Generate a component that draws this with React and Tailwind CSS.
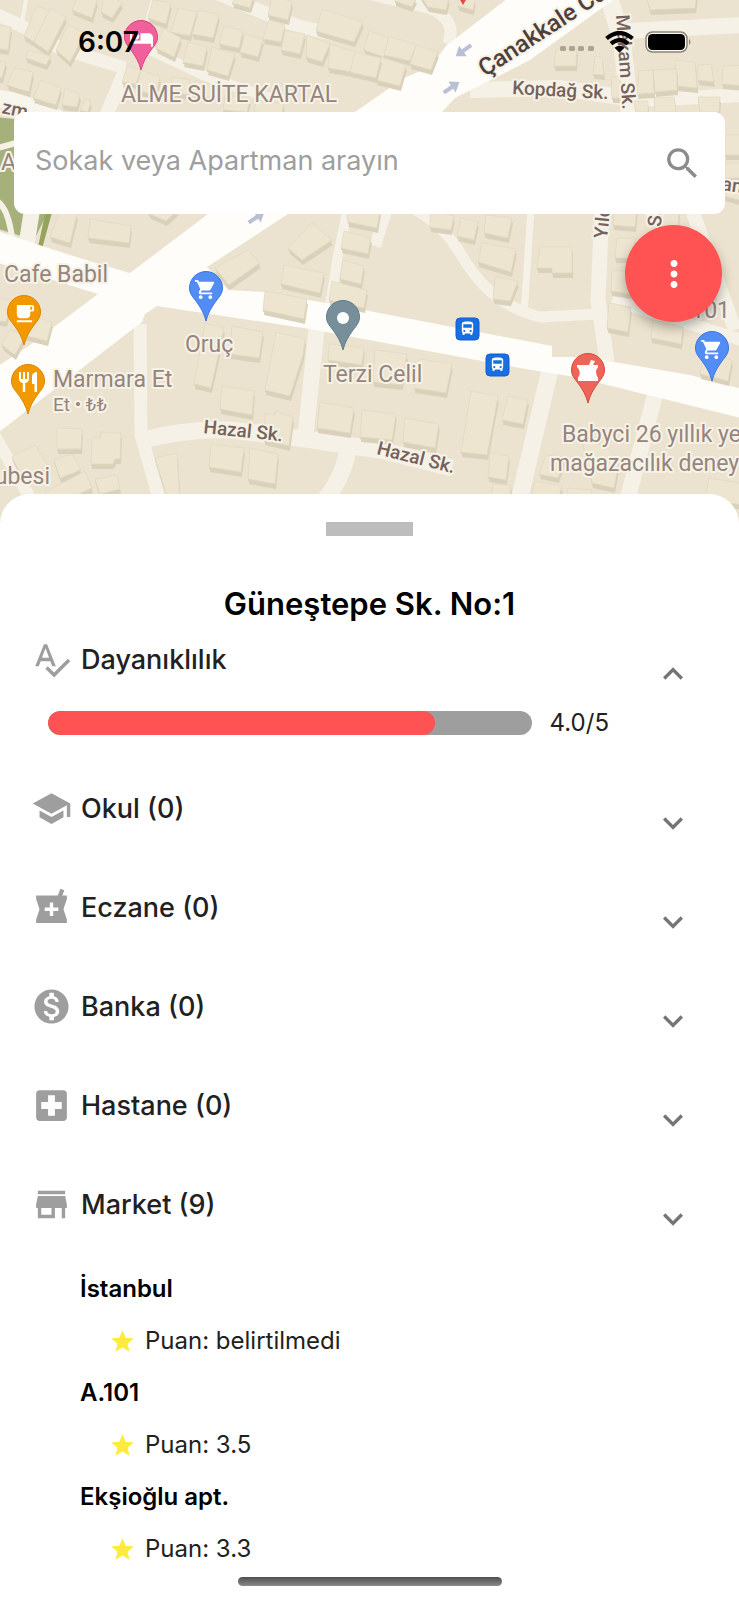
import React from "react";
import {
  MdSearch,
  MdMoreVert,
  MdSpellcheck,
  MdSchool,
  MdLocalPharmacy,
  MdMonetizationOn,
  MdLocalHospital,
  MdStore,
  MdExpandMore,
  MdExpandLess,
  MdStar,
  MdHotel,
  MdLocalCafe,
  MdRestaurant,
  MdShoppingCart,
  MdDirectionsBus,
} from "react-icons/md";

const BUILDINGS = [
  "37,5 50,12 36,43 24,36", "50,8 66,17 48,52 34,42", "68,25 85,33 70,62 56,50",
  "104,-8 122,3 112,18 101,12", "78,-5 97,0 92,18 72,10", "153,0 171,3 166,24 148,18",
  "178,8 197,12 190,36 171,32", "199,10 219,15 213,38 192,34", "224,26 243,31 239,48 219,44",
  "245,34 263,39 258,57 240,52", "163,28 181,38 174,57 156,48", "188,42 207,47 203,66 183,62",
  "212,47 235,54 228,76 207,70", "240,-8 254,-4 250,8 232,3", "272,-5 292,2 288,20 268,15",
  "322,9 363,22 354,42 316,31", "269,20 285,25 281,42 263,39", "285,30 305,34 300,54 281,50",
  "307,35 330,44 322,62 306,57", "330,44 356,52 352,72 328,68", "369,31 389,38 384,57 364,50",
  "389,36 416,45 410,61 384,55", "416,45 438,52 431,70 410,64", "381,57 406,65 400,86 376,80",
  "355,52 381,58 376,78 350,72", "28,50 51,56 46,65 26,58", "-2,25 11,27 8,50 -5,48",
  "14,68 33,72 29,92 7,85", "-5,60 6,62 2,78 -5,78", "41,80 61,88 56,105 33,98",
  "65,88 80,95 77,107 62,105", "85,99 91,101 88,112 80,110", "127,66 141,70 136,84 122,82",
  "141,70 160,77 156,95 136,90", "172,77 190,80 188,95 170,92", "195,80 215,86 211,98 193,95",
  "225,95 250,99 247,112 223,110", "256,100 284,104 282,114 254,112",
  "60,210 77,214 70,243 50,237", "90,219 131,226 129,243 88,238", "145,205 178,210 166,221 150,214",
  "312,223 332,240 302,260 288,248", "248,250 260,263 229,285 215,268",
  "347,210 380,210 377,228 348,222", "344,231 371,238 368,254 341,248",
  "284,265 324,273 320,293 281,284", "343,260 364,266 361,284 340,279",
  "332,281 367,290 364,308 329,300", "265,291 307,299 304,319 263,310",
  "205,323 224,328 211,388 194,384", "232,326 263,332 259,358 230,354",
  "276,332 305,339 303,355 290,396 265,390", "222,386 254,391 252,415 220,409",
  "57,428 82,429 81,449 57,449", "92,438 100,438 101,432 121,433 120,459 115,459 113,464 91,464",
  "211,444 244,448 241,472 209,467", "250,448 278,454 275,484 248,479",
  "265,413 275,415 276,411 293,417 289,446 264,440", "320,402 354,408 350,433 317,428",
  "12,457 35,445 50,468 22,477", "54,460 72,454 81,470 60,478", "85,471 92,488 55,505 45,492",
  "95,479 117,475 120,489 100,494", "155,458 177,453 180,505 168,500",
  "329,344 364,348 362,365 328,360", "362,410 396,414 392,440 360,437",
  "25,314 52,322 47,341 20,334", "10,330 25,336 15,355 2,345", "-6,298 12,300 6,322 -6,320",
  "375,350 407,354 402,385 373,382", "419,359 452,364 446,393 414,388",
  "471,391 498,396 490,440 487,455 461,452", "508,396 528,400 523,424 502,420",
  "405,418 439,424 435,448 403,442", "490,453 509,456 506,480 488,477",
  "493,484 511,485 509,500 491,500", "546,455 565,457 558,478 539,474",
  "582,440 605,446 619,460 614,488 592,483", "535,481 562,486 558,500 530,500",
  "568,488 592,490 590,500 566,500", "709,478 745,484 745,505 705,500",
  "486,215 512,218 508,238 484,233", "430,210 454,216 451,230 430,227", "461,218 478,222 474,240 457,236",
  "482,243 516,249 511,272 478,262", "495,276 518,281 510,301 493,299",
  "540,247 572,247 572,273 552,273 552,268 537,268", "609,303 631,307 628,332 607,328",
  "653,320 683,327 681,344 651,338", "614,208 637,208 635,227 613,225",
  "617,238 635,238 634,258 615,258", "612,270 632,272 630,294 611,291",
  "655,208 679,210 678,228 655,228", "704,352 732,360 728,381 700,374",
  "645,-10 697,-6 695,8 650,10", "556,49 577,49 576,66 554,66", "595,56 602,57 604,75 593,74",
  "675,60 695,62 697,88 676,86", "653,70 677,69 677,90 655,92", "639,71 653,70 654,93 637,94",
  "698,65 711,64 714,82 698,80", "723,66 745,65 745,86 722,84", "611,77 620,76 622,98 612,98",
  "634,101 648,101 648,112 636,112", "654,98 674,97 676,112 655,112", "698,97 720,97 719,112 700,112",
  "725,135 745,135 745,155 725,155", "725,163 745,163 745,178 725,178", "725,184 745,188 739,200 724,196",
  "420,-5 449,-2 446,10 428,7", "458,-5 475,0 473,10 458,6", "395,-5 416,-2 412,7 395,1",
];

const SIDE_STREETS = [
  ["M-5 14 L20 25 L60 48 L125 68", 13],
  ["M27 -5 L21 27", 4],
  ["M155 -5 L141 44", 5],
  ["M127 66 L106 116", 14],
  ["M150 50 L205 76 L270 98", 10],
  ["M210 -10 L262 12 L300 27 L345 36", 14],
  ["M370 -6 L430 8 Q458 20 448 44", 12],
  ["M470 90 L560 88 L640 100", 16],
  ["M608 -5 L622 40 L630 116", 18],
  ["M626 31 L745 25", 16],
  ["M640 100 L745 95", 14],
  ["M348 208 L338 255 L330 306", 10],
  ["M387 208 L375 246", 12],
  ["M408 206 Q442 222 462 256 Q490 305 540 317 L600 314", 11],
  ["M531 208 L524 316", 7],
  ["M602 208 L598 300 L607 362", 15],
  ["M612 300 L745 341", 12],
  ["M690 204 L735 330", 14],
  ["M140 324 L141 435 L161 505", 13],
  ["M143 440 Q190 428 230 430 L305 439 L380 450 L452 468", 17],
  ["M317 325 L305 440", 16],
  ["M348 450 Q342 482 320 505", 17],
  ["M550 370 L518 505", 17],
  ["M655 395 L626 505", 16],
  ["M-5 436 L34 505", 12],
];

function Pin({ x, y, fill, edge, children }) {
  return (
    <g transform={`translate(${x} ${y})`}>
      <path
        d="M0 33 C-2 25 -5 20 -10 13 C-14 8 -16.5 5 -16.5 0 A16.5 16.5 0 1 1 16.5 0 C16.5 5 14 8 10 13 C5 20 2 25 0 33Z"
        fill={fill}
        stroke={edge}
        strokeWidth="1"
      />
      {children}
    </g>
  );
}

function Bus({ x, y }) {
  return (
    <g transform={`translate(${x} ${y})`}>
      <rect width="23" height="22" rx="4" fill="#1a6fe0" stroke="#0f5fd0" />
      <MdDirectionsBus x="3" y="2" size={17} color="#fff" />
    </g>
  );
}

function Arrow({ x, y, angle }) {
  return (
    <path
      transform={`translate(${x} ${y}) rotate(${angle})`}
      d="M-10 -2 L0 -2 L0 -6.500 L9 0 L0 6.500 L0 2 L-10 2Z"
      fill="#b8bfd6"
    />
  );
}

function MapView() {
  return (
    <svg
      className="absolute inset-0 h-full w-full font-[Roboto,sans-serif]"
      viewBox="0 0 739 524"
      preserveAspectRatio="xMidYMin slice"
      role="img"
      aria-label="Harita"
    >
      <rect x="-400" width="1600" height="524" fill="#ebe3cf" />
      <path d="M-5 117 L14 119 L70 200 L47 214 L34 240 L-5 228Z" fill="#a5b07a" />
      <path d="M47 205 L54 205 L42 249 L38 247Z" fill="#94a45f" />
      <g fill="none" stroke="#f5f1e6" strokeLinejoin="round">
        <path d="M46 120 L26 248" strokeWidth="16" />
        <path d="M-2 148 L16 143 M-5 200 Q8 206 12 238" strokeWidth="6" />
        {SIDE_STREETS.map(([d, w]) => (
          <path key={d} d={d} strokeWidth={w} />
        ))}
      </g>
      <path d="M-5 98 Q25 102 60 120" fill="none" stroke="#f8f5ec" strokeWidth="18" />
      <g fill="#fefdf9">
        <path d="M512 -5 L447 45 L430 67 L404 78 L355 112 L208 214 L130 273 Q70 256 -5 230 L-5 262 L98 294 L30 345 L-5 368 L-5 435 L142 322 L145 314 L157 306 L310 329 L369 340 L520 368 L575 377 L745 419 L745 390 L690 375 L585 357 L552 357 L552 346 L369 311 L265 292 L228 290 L207 267 L288 214 L442 112 L455 98 L530 60 L620 -5Z" />
      </g>
      <g strokeLinejoin="round">
        {BUILDINGS.map((p) => (
          <g key={p}>
            <polygon points={p} fill="#dad1bb" transform="translate(1 5)" />
            <polygon points={p} fill="#dad1bb" transform="translate(0 2)" />
            <polygon points={p} fill="#ede5d0" stroke="#e0d8c2" strokeWidth="0.700" />
          </g>
        ))}
      </g>
      <Arrow x={463} y={51} angle={144} />
      <Arrow x={452} y={87} angle={-34} />
      <Arrow x={257} y={217} angle={-34} />

      <g paintOrder="stroke" stroke="#f7f2e6" strokeWidth="4" strokeLinejoin="round" fill="#95857e" fontSize="23">
        <text x="121" y="102">ALME SUİTE KARTAL</text>
        <text x="4" y="282">Cafe Babil</text>
        <text x="185" y="352">Oruç</text>
        <text x="323" y="382">Terzi Celil</text>
        <text x="53" y="387">Marmara Et</text>
        <text x="53" y="411" fontSize="19">Et • ₺₺</text>
        <text x="50" y="484" textAnchor="end">ubesi</text>
        <text x="562" y="442">Babyci 26 yıllık ye</text>
        <text x="550" y="471">mağazacılık deney</text>
        <text x="730" y="318" textAnchor="end">A.101</text>
        <text x="1" y="170">Aç</text>
      </g>
      <g paintOrder="stroke" stroke="#f7f2e6" strokeWidth="4" strokeLinejoin="round" fill="#74625d" fontSize="19" fontWeight="500">
        <text transform="translate(203 433) rotate(6)">Hazal Sk.</text>
        <text transform="translate(376 454) rotate(14)">Hazal Sk.</text>
        <text transform="translate(512 94) rotate(3)">Kopdağ Sk.</text>
        <text transform="translate(616 15) rotate(86)">Makam Sk.</text>
        <text transform="translate(607 239) rotate(-84)">Yıld</text>
        <text transform="translate(661 227) rotate(-87)">Sk.</text>
        <text transform="translate(1 113) rotate(12)">zm</text>
        <text transform="translate(721 190) rotate(8)">an</text>
        <text transform="translate(485 77) rotate(-33)" fontSize="24" fill="#4f3f3c">Çanakkale Cd.</text>
      </g>

      <path d="M459 -2 L463 5 L467 -2Z" fill="#e8473f" />
      <Pin x={141} y={37} fill="#f0609a" edge="#dc3f80">
        <MdHotel x="-12" y="-11" size={25} color="#fff" />
      </Pin>
      <Pin x={24} y={312} fill="#f29900" edge="#dd8500">
        <MdLocalCafe x="-11" y="-10" size={23} color="#fff" />
      </Pin>
      <Pin x={28} y={381} fill="#f29900" edge="#dd8500">
        <MdRestaurant x="-12" y="-11" size={24} color="#fff" />
      </Pin>
      <Pin x={206} y={288} fill="#518df5" edge="#3a76e4">
        <MdShoppingCart x="-12" y="-10" size={23} color="#fff" />
      </Pin>
      <Pin x={343} y={317} fill="#768f9b" edge="#607d8b">
        <circle r="6" cy="1" fill="#fff" />
      </Pin>
      <Pin x={588} y={370} fill="#ee6459" edge="#d9453a">
        <path d="M-11 -5 H1 L3 -10 L7 -9 L5 -5 H10 V-3 Q6 2 10 8 V11 H-10 V8 Q-6 2 -11 -3Z" fill="#fff" />
      </Pin>
      <Pin x={712} y={348} fill="#518df5" edge="#3a76e4">
        <MdShoppingCart x="-12" y="-10" size={23} color="#fff" />
      </Pin>
      <Bus x={456} y={318} />
      <Bus x={486} y={354} />
    </svg>
  );
}

function StatusBar() {
  return (
    <div className="flex h-[84px] items-center justify-between pr-[47px] pl-[78px]">
      <time className="text-[28px] leading-8 font-semibold text-black">6:07</time>
      <div className="flex items-center">
        <svg width="34" height="18" viewBox="0 0 34 18" className="mr-[11px]" aria-label="Sinyal">
          {[0, 9, 18, 28].map((x) => (
            <rect key={x} x={x} y="13" width="6" height="5" rx="1.500" fill="#aba58f" />
          ))}
        </svg>
        <svg width="29" height="22" viewBox="0 0 29 22" className="mr-[11px]" aria-label="Wi-Fi">
          <g fill="none" stroke="#000" strokeWidth="4.200">
            <path d="M1.500 7.500 Q14.500 -3.500 27.500 7.500" />
            <path d="M6 12.700 Q14.500 5.500 23 12.700" />
          </g>
          <path d="M9.500 16.800 Q14.500 12.800 19.500 16.800 L14.500 21.800Z" />
        </svg>
        <svg width="47" height="22" viewBox="0 0 47 22" aria-label="Pil">
          <rect x="1" y="1" width="41" height="20" rx="6.500" fill="#fbf8ef" stroke="#8b8678" strokeWidth="1.500" />
          <rect x="3" y="3" width="37" height="16" rx="4.500" />
          <path d="M44 8 Q47 11 44 14Z" fill="#8b8678" />
        </svg>
      </div>
    </div>
  );
}

function Section({ icon: Icon, title, open, children }) {
  const Chevron = open ? MdExpandLess : MdExpandMore;
  return (
    <section>
      <button type="button" aria-expanded={!!children} className="flex w-full items-start pr-[46px] pl-[31px] text-left">
        <Icon size={41} className="shrink-0 text-[#9e9e9e]" />
        <span className="ml-[9px] grow text-[27px] leading-[41px] font-medium text-[#212121]">{title}</span>
        <Chevron size={40} className="mt-[15px] shrink-0 text-[#757575]" />
      </button>
      {children}
    </section>
  );
}

function Rating({ value, max }) {
  return (
    <div className="flex h-[50px] items-start gap-[18px] pt-[17px] pr-[130px] pl-[48px]">
      <div
        role="progressbar"
        aria-label="Dayanıklılık"
        aria-valuenow={value}
        aria-valuemax={max}
        className="h-6 grow overflow-hidden rounded-full bg-[#9e9e9e]"
      >
        <div className="h-full rounded-full bg-[#ff5252]" style={{ width: `${(value / max) * 100}%` }} />
      </div>
      <span className="text-[24px] leading-6 text-[#212121]">
        {value.toFixed(1)}/{max}
      </span>
    </div>
  );
}

const MARKETS = [
  ["İstanbul", "belirtilmedi"],
  ["A.101", "3.5"],
  ["Ekşioğlu apt.", "3.3"],
];

export default function App() {
  return (
    <div lang="tr" className="relative flex min-h-screen flex-col bg-white font-[Inter,sans-serif]">
      <header className="relative -mb-[30px] min-h-[524px] overflow-hidden">
        <MapView />
        <div className="relative">
          <StatusBar />
          <form role="search" className="mx-[14px] mt-[28px] flex h-[102px] items-center rounded-[11px] bg-white pr-[22px] pl-[21px]">
            <input
              type="search"
              aria-label="Sokak veya Apartman arayın"
              placeholder="Sokak veya Apartman arayın"
              className="mb-1 min-w-0 grow bg-transparent text-[27px] leading-9 text-[#212121] outline-none placeholder:text-[#9e9e9e]"
            />
            <button type="button" aria-label="Ara">
              <MdSearch size={41} className="text-[#8c8c8c]" />
            </button>
          </form>
          <div className="mt-[11px] mr-[17px] flex justify-end">
            <button
              type="button"
              aria-label="Menü"
              className="flex size-[97px] items-center justify-center rounded-full bg-[#ff5252] shadow-[0_6px_12px_rgba(0,0,0,0.3)]"
            >
              <MdMoreVert size={42} className="text-white" />
            </button>
          </div>
        </div>
      </header>

      <main className="relative rounded-t-[30px] bg-white pt-[28px]">
        <div className="mx-auto h-[14px] w-[87px] bg-[#bdbdbd]" />
        <h1 className="mt-[48px] text-center text-[31px] leading-10 font-semibold text-black">Güneştepe Sk. No:1</h1>
        <div className="mt-[15px] flex flex-col gap-[44px]">
          <Section icon={MdSpellcheck} title="Dayanıklılık" open>
            <Rating value={4} max={5} />
          </Section>
          <Section icon={MdSchool} title="Okul (0)" />
          <Section icon={MdLocalPharmacy} title="Eczane (0)" />
          <Section icon={MdMonetizationOn} title="Banka (0)" />
          <Section icon={MdLocalHospital} title="Hastane (0)" />
          <Section icon={MdStore} title="Market (9)">
            <ul className="pt-[24px] pl-[80px]">
              {MARKETS.map(([name, score]) => (
                <li key={name}>
                  <h2 className="text-[24px] leading-[52px] font-semibold text-black">{name}</h2>
                  <p className="flex items-center pl-[29px] text-[24px] leading-[52px] text-[#212121]">
                    <MdStar size={27} className="mr-[9px] text-[#ffeb3b]" />
                    Puan: {score}
                  </p>
                </li>
              ))}
            </ul>
          </Section>
        </div>
      </main>
      <div className="mx-auto mt-auto mb-[14px] h-[9px] w-[264px] rounded-full bg-linear-to-b from-[#4f4f4f] to-[#8a8a8a]" />
    </div>
  );
}
